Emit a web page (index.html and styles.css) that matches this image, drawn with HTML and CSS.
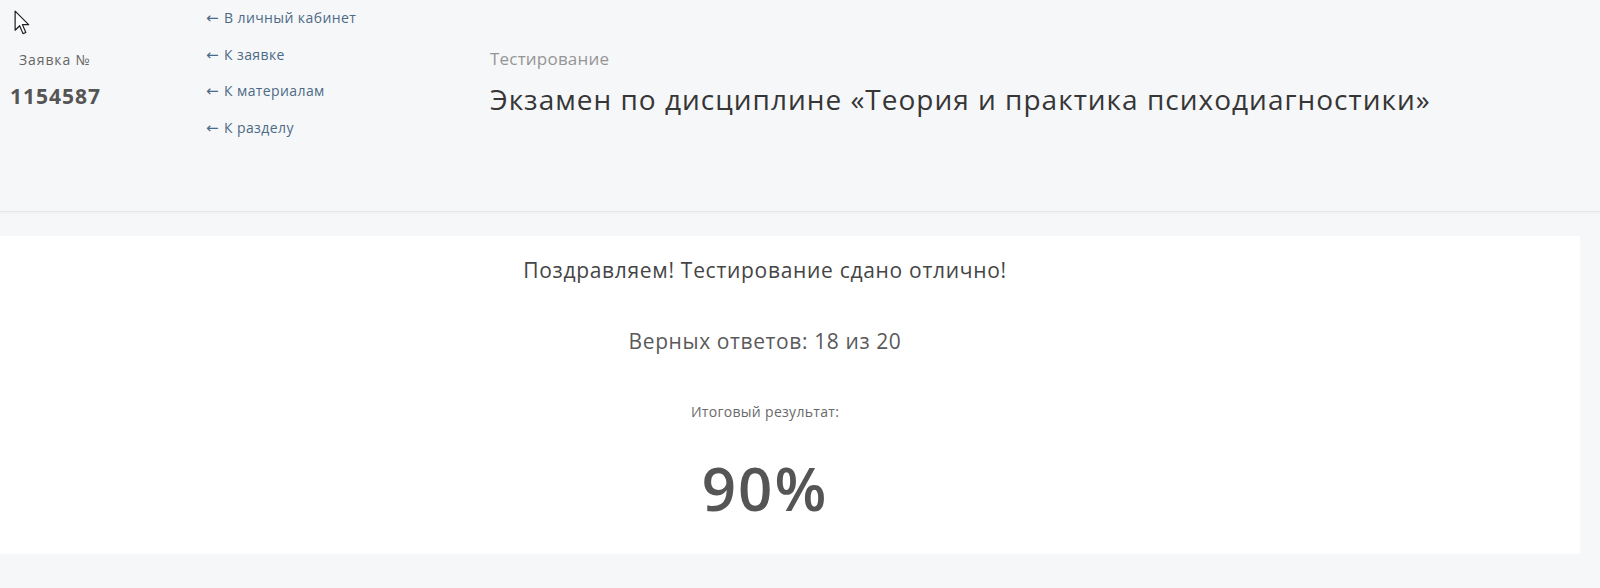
FILE: index.html
```html
<!DOCTYPE html>
<html lang="ru">
<head>
  <meta charset="UTF-8">
  <meta name="viewport" content="width=device-width, initial-scale=1.0">
  <title>Тестирование | Результат</title>
  <link rel="stylesheet" href="styles.css">
</head>
<body>
  <svg class="cursor" width="18" height="27" viewBox="0 0 16 24">
    <path d="M1 1 L1 18 L5 14 L8 21 L10.5 20 L7.5 13 L13 13 Z" fill="#fff" stroke="#222" stroke-width="1.1" stroke-linejoin="round"/>
  </svg>

  <header class="top">
    <div class="order">
      <div class="order-label">Заявка №</div>
      <div class="order-num">1154587</div>
    </div>
    <nav class="back-links">
      <a href="#"><span class="arrow">←</span>В личный кабинет</a>
      <a href="#"><span class="arrow">←</span>К заявке</a>
      <a href="#"><span class="arrow">←</span>К материалам</a>
      <a href="#"><span class="arrow">←</span>К разделу</a>
    </nav>
    <div class="heading">
      <div class="kind">Тестирование</div>
      <h1>Экзамен по дисциплине «Теория и практика психодиагностики»</h1>
    </div>
  </header>

  <main class="result">
    <p class="congrats">Поздравляем! Тестирование сдано отлично!</p>
    <p class="correct">Верных ответов: 18 из 20</p>
    <p class="final-label">Итоговый результат:</p>
    <div class="score">90%</div>
  </main>
</body>
</html>
```

FILE: styles.css
```css
body {
  margin: 0;
  font-family: 'Open Sans', 'Noto Sans', sans-serif;
  background-color: #f6f7f9;
  color: #444;
}

.cursor {
  position: absolute;
  left: 14px;
  top: 10px;
}

.top {
  display: flex;
  height: 211px;
  border-bottom: 1px solid #e6e7ea;
  box-shadow: 0 1px 2px rgba(0, 0, 0, 0.04);
}

.order {
  width: 196px;
  padding-left: 10px;
  padding-top: 50px;
}

.order-label {
  padding-left: 9px;
  font-size: 14px;
  letter-spacing: 0.9px;
  line-height: 20px;
  color: #666;
}

.order-num {
  margin-top: 14px;
  font-size: 21px;
  font-weight: 700;
  letter-spacing: 1px;
  line-height: 24px;
  color: #555;
}

.back-links {
  width: 284px;
}

.back-links a {
  display: block;
  height: 36.6px;
  font-size: 14px;
  letter-spacing: 0.4px;
  line-height: 36.6px;
  color: #4d6a84;
  text-decoration: none;
}

.back-links .arrow {
  display: inline-block;
  width: 18px;
  font-family: 'DejaVu Sans', sans-serif;
  font-size: 15px;
  line-height: 1;
  letter-spacing: 0;
}

.heading {
  padding-top: 47px;
}

.kind {
  font-size: 17px;
  letter-spacing: 0.2px;
  line-height: 24px;
  color: #959595;
}

.heading h1 {
  margin: 12px 0 0;
  font-size: 28px;
  font-weight: 500;
  letter-spacing: 1px;
  line-height: 32px;
  color: #363636;
}

.result {
  margin: 24px 20px 0 0;
  padding: 22px 50px 31px 0;
  background-color: #fff;
  text-align: center;
}

.result p {
  margin: 0;
}

.congrats {
  font-size: 21px;
  font-weight: 500;
  letter-spacing: 0.7px;
  line-height: 24px;
  color: #454545;
}

.correct {
  margin-top: 47px !important;
  font-size: 21px;
  letter-spacing: 0.6px;
  line-height: 24px;
  color: #5a5a5a;
}

.final-label {
  margin-top: 50px !important;
  font-size: 14px;
  letter-spacing: 0.3px;
  line-height: 18px;
  color: #6a6a6a;
}

.score {
  margin-top: 32px;
  font-size: 60px;
  font-weight: 600;
  letter-spacing: 2px;
  line-height: 70px;
  color: #555;
}
```
